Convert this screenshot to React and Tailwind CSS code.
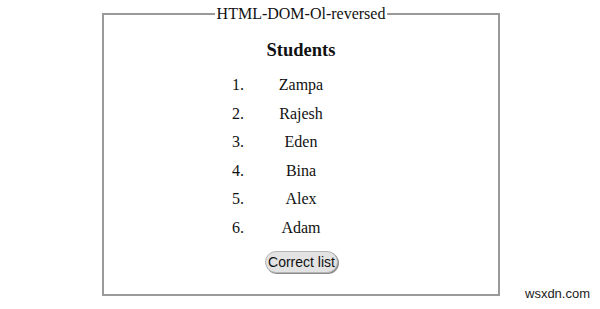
export default function App() {
  const names = ["Zampa", "Rajesh", "Eden", "Bina", "Alex", "Adam"];
  return (
    <div className="w-[600px] h-[309px] bg-white relative" style={{ fontFamily: '"Liberation Serif", "Times New Roman", serif' }}>
      <div className="pt-[5px] pl-[102px]">
        <fieldset className="w-[398px] h-[291px] border-2 border-solid border-[#9a9a9a] m-0 p-0 text-center text-[#111]">
          <legend className="mx-auto px-[2px] text-[16px] leading-[18px]">HTML-DOM-Ol-reversed</legend>
          <h2 className="font-bold text-[18.5px] leading-[22px] mt-[16px]">Students</h2>
          <div className="w-[140px] mx-auto mt-[10px]">
            {names.map((n, i) => (
              <div key={n} className="flex h-[28.5px] leading-[28.5px] text-[16px]">
                <span className="w-[36px] pl-[1px] text-left">{i + 1}.</span>
                <span className="flex-1 text-center">{n}</span>
                <span className="w-[36px]" />
              </div>
            ))}
          </div>
          <div className="mt-[9px] flex justify-center">
            <button
              className="w-[73px] h-[22px] rounded-full bg-[#e3e3e3] border border-[#b5b5b5] text-[14px] leading-[18px] text-[#111] shadow-[1px_1px_0_#8c8c8c] pl-[1px]"
              style={{ fontFamily: '"Liberation Sans", Arial, sans-serif' }}
            >
              Correct list
            </button>
          </div>
        </fieldset>
      </div>
      <div className="absolute left-[525px] top-[284px] text-[13px] text-[#222]" style={{ fontFamily: '"Liberation Sans", Arial, sans-serif' }}>
        wsxdn.com
      </div>
    </div>
  );
}
